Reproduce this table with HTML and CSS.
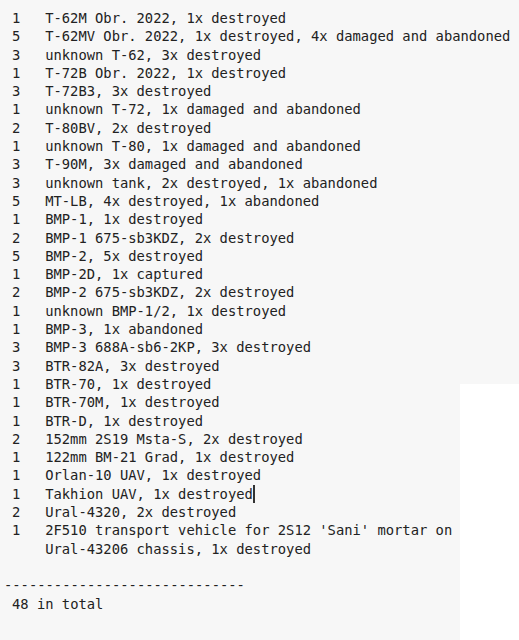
FILE: index.html
```html
<!DOCTYPE html>
<html>
<head>
<meta charset="utf-8">
<link rel="stylesheet" href="styles.css">
</head>
<body>
<main class="sheet">
  <ul class="list">
    <li class="row"><span class="num">1</span><span class="txt">T-62M Obr. 2022, 1x destroyed</span></li>
    <li class="row"><span class="num">5</span><span class="txt">T-62MV Obr. 2022, 1x destroyed, 4x damaged and abandoned</span></li>
    <li class="row"><span class="num">3</span><span class="txt">unknown T-62, 3x destroyed</span></li>
    <li class="row"><span class="num">1</span><span class="txt">T-72B Obr. 2022, 1x destroyed</span></li>
    <li class="row"><span class="num">3</span><span class="txt">T-72B3, 3x destroyed</span></li>
    <li class="row"><span class="num">1</span><span class="txt">unknown T-72, 1x damaged and abandoned</span></li>
    <li class="row"><span class="num">2</span><span class="txt">T-80BV, 2x destroyed</span></li>
    <li class="row"><span class="num">1</span><span class="txt">unknown T-80, 1x damaged and abandoned</span></li>
    <li class="row"><span class="num">3</span><span class="txt">T-90M, 3x damaged and abandoned</span></li>
    <li class="row"><span class="num">3</span><span class="txt">unknown tank, 2x destroyed, 1x abandoned</span></li>
    <li class="row"><span class="num">5</span><span class="txt">MT-LB, 4x destroyed, 1x abandoned</span></li>
    <li class="row"><span class="num">1</span><span class="txt">BMP-1, 1x destroyed</span></li>
    <li class="row"><span class="num">2</span><span class="txt">BMP-1 675-sb3KDZ, 2x destroyed</span></li>
    <li class="row"><span class="num">5</span><span class="txt">BMP-2, 5x destroyed</span></li>
    <li class="row"><span class="num">1</span><span class="txt">BMP-2D, 1x captured</span></li>
    <li class="row"><span class="num">2</span><span class="txt">BMP-2 675-sb3KDZ, 2x destroyed</span></li>
    <li class="row"><span class="num">1</span><span class="txt">unknown BMP-1/2, 1x destroyed</span></li>
    <li class="row"><span class="num">1</span><span class="txt">BMP-3, 1x abandoned</span></li>
    <li class="row"><span class="num">3</span><span class="txt">BMP-3 688A-sb6-2KP, 3x destroyed</span></li>
    <li class="row"><span class="num">3</span><span class="txt">BTR-82A, 3x destroyed</span></li>
    <li class="row"><span class="num">1</span><span class="txt">BTR-70, 1x destroyed</span></li>
    <li class="row"><span class="num">1</span><span class="txt">BTR-70M, 1x destroyed</span></li>
    <li class="row"><span class="num">1</span><span class="txt">BTR-D, 1x destroyed</span></li>
    <li class="row"><span class="num">2</span><span class="txt">152mm 2S19 Msta-S, 2x destroyed</span></li>
    <li class="row"><span class="num">1</span><span class="txt">122mm BM-21 Grad, 1x destroyed</span></li>
    <li class="row"><span class="num">1</span><span class="txt">Orlan-10 UAV, 1x destroyed</span></li>
    <li class="row"><span class="num">1</span><span class="txt">Takhion UAV, 1x destroyed<span class="caret"></span></span></li>
    <li class="row"><span class="num">2</span><span class="txt">Ural-4320, 2x destroyed</span></li>
    <li class="row"><span class="num">1</span><span class="txt">2F510 transport vehicle for 2S12 'Sani' mortar on<br>Ural-43206 chassis, 1x destroyed</span></li>
  </ul>
  <div class="rule">-----------------------------</div>
  <div class="total">48 in total</div>
</main>
<div class="patch"></div>
</body>
</html>
```

FILE: styles.css
```css
html, body {
  margin: 0;
  padding: 0;
  background: #f7f7f7;
}
body {
  width: 519px;
  height: 640px;
  overflow: hidden;
  position: relative;
  font-family: "DejaVu Sans Mono", "Liberation Mono", monospace;
  font-size: 13.8px;
  line-height: 18.3px;
  color: #222222;
}
.sheet {
  position: relative;
  z-index: 1;
  padding-top: 9px;
}
.list {
  list-style: none;
  margin: 0;
  padding: 0 0 0 12px;
}
.row {
  display: grid;
  grid-template-columns: 33.2px 1fr;
  white-space: nowrap;
}
.num {
  display: block;
}
.txt {
  display: block;
}
.caret {
  display: inline-block;
  width: 1.5px;
  height: 18px;
  background: #333;
  vertical-align: -4px;
  margin-left: 0.5px;
}
.rule {
  margin-top: 18.3px;
  padding-left: 4px;
  white-space: pre;
}
.total {
  padding-left: 12px;
  white-space: pre;
}
.patch {
  position: absolute;
  left: 460px;
  top: 384px;
  right: 0;
  bottom: 0;
  background: #ffffff;
  z-index: 0;
}
```
